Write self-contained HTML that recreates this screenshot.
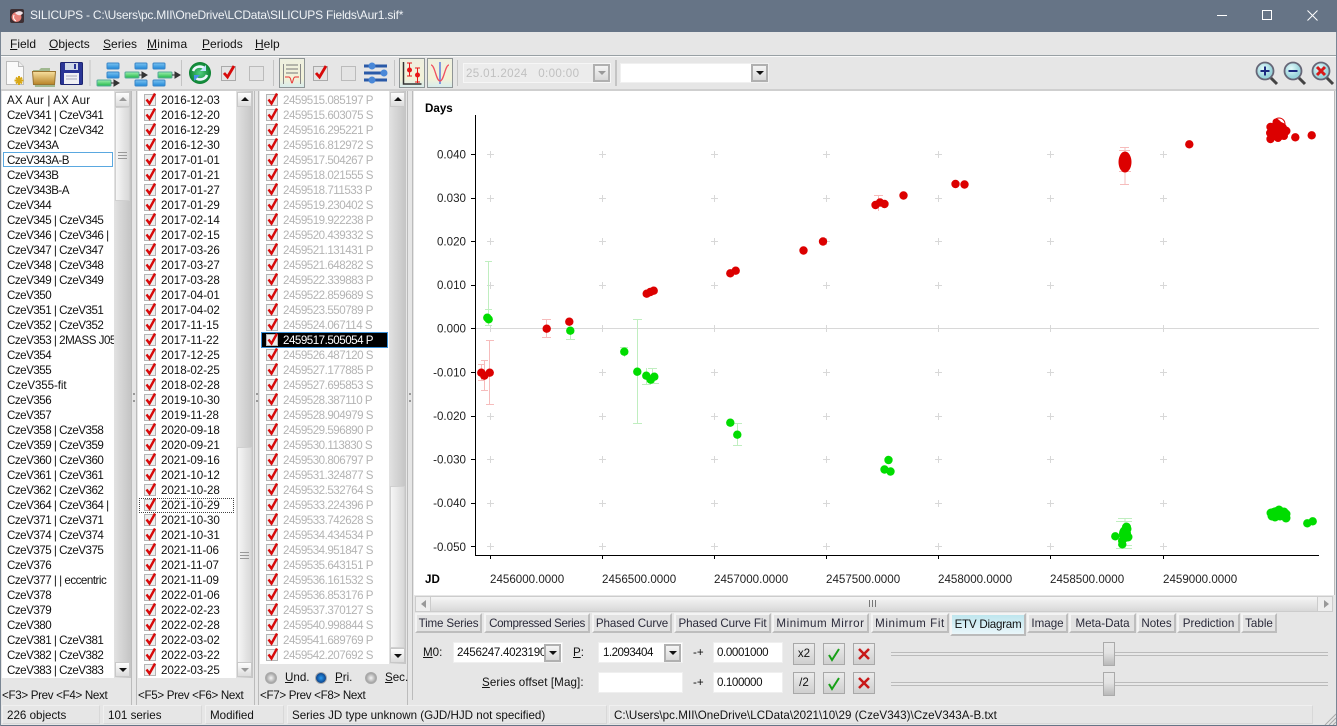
<!DOCTYPE html>
<html><head><meta charset="utf-8"><title>SILICUPS</title>
<style>
html,body{margin:0;padding:0;background:#e6e6e6}
#w{position:relative;width:1337px;height:726px;overflow:hidden;background:#e6e6e6;font:11.6px/15px "Liberation Sans",sans-serif;color:#111}
#w *{box-sizing:border-box}
.a{position:absolute}
.t{position:absolute;white-space:nowrap;line-height:15px}
u{text-decoration:underline}
.list{position:absolute;top:91px;height:587px;background:#fff;overflow:hidden}
.list div{height:15px;line-height:15px;white-space:nowrap;overflow:hidden}
#l1{left:2px;width:112px;padding:2px 0 0 5px;letter-spacing:-.5px}
#l2{left:138px;width:98px;padding:2px 0 0 23px;letter-spacing:-.05px}
#l3{left:260px;width:129px;height:573px;padding:2px 0 0 23px;color:#b4b4b4;letter-spacing:-.5px}
.sb{position:absolute;width:17px;background:linear-gradient(90deg,#e2e2e2,#c4c4c4)}
.th{position:absolute;left:1px;width:15px;background:linear-gradient(90deg,#f6f6f6,#d8d8d8);border:1px solid #d0d0d0}
.ab{position:absolute;left:1px;width:15px;height:15px;background:linear-gradient(#fdfdfd,#dcdcdc);border:1px solid #c8c8c8}
.up:after,.dn:after{content:"";position:absolute;left:3px;border:4px solid transparent}
.up:after{top:1px;border-bottom:4px solid #111;border-top:0;margin-top:3px}
.dn:after{top:5px;border-top:4px solid #111;border-bottom:0}
.g:after{border-top-color:#999!important;border-bottom-color:#999!important}
.tab{position:absolute;top:613px;height:20px;background:#e2e2e2;border:2px solid #f4f4f4;border-bottom:2px solid #bdbdbd;border-right:2px solid #bdbdbd;text-align:center;line-height:17px;white-space:nowrap;color:#2a2a3a}
.inp{position:absolute;background:#fff;border:1px solid #efefef;height:21px;line-height:20px;padding-left:3px;white-space:nowrap;letter-spacing:-.4px}
.btn{position:absolute;width:22px;height:22px;background:linear-gradient(#ececec,#cfcfcf);border:1px solid #a8a8a8;text-align:center;line-height:20px}
.cb{position:absolute;width:17px;height:18px;background:linear-gradient(#f4f4f4,#d8d8d8);border:2px solid #b0b0b0}
.cb:after{content:"";position:absolute;left:3px;top:5px;border:4px solid transparent;border-bottom:0;border-top:4px solid #111}
.tb{position:absolute;top:58px;width:26px;height:30px;border:1px solid #8f9596;background:linear-gradient(#eef0e0,#f3f2d8 70%,#d8ecec)}
.st{position:absolute;top:705px;height:19px;border:1px solid #f0f0f0;border-right-color:#d8d8d8;border-bottom-color:#d8d8d8;line-height:19px;padding-left:4px;white-space:nowrap}
.sl{position:absolute;left:891px;width:437px;height:4px;border-top:1px solid #bbb;border-bottom:1px solid #bbb;background:#e8e8e8}
.slt{position:absolute;left:1103px;width:12px;height:24px;background:linear-gradient(#e8e8e8,#e2e2e2 45%,#b8b8b8);border:1px solid #aaa}
.m{top:37px;font-size:12px}
.f{top:688px;letter-spacing:-.32px}
</style></head><body>
<div id="w">

<!-- title bar -->
<div class="a" style="left:0;top:0;width:1337px;height:32px;background:#667486"></div>
<svg class="a" style="left:9px;top:8px" width="16" height="16" viewBox="0 0 16 16"><rect x="1" y="1" width="14" height="14" rx="2" fill="#3d2f33"/><circle cx="7.500" cy="9" r="5" fill="#e88078"/><path d="M6 5c3-3 7-2 8 0-2 3-5 3-8 0z" fill="#f4e4e8"/><path d="M5 7c-1 3 0 5 2 6" stroke="#fff" fill="none"/></svg>
<div class="t" style="left:30px;top:8px;color:#f0f3f6;font-size:12px;letter-spacing:-.22px">SILICUPS - C:\Users\pc.MII\OneDrive\LCData\SILICUPS Fields\Aur1.sif*</div>
<div class="a" style="left:1217px;top:15px;width:10px;height:1px;background:#fff"></div>
<div class="a" style="left:1262px;top:10px;width:10px;height:10px;border:1px solid #fff"></div>
<svg class="a" style="left:1307px;top:10px" width="11" height="11"><path d="M.5.500l10 10M10.500.500l-10 10" stroke="#fff" fill="none"/></svg>

<!-- menu -->
<div class="t m" style="left:10px"><u>F</u>ield</div>
<div class="t m" style="left:49px"><u>O</u>bjects</div>
<div class="t m" style="left:103px"><u>S</u>eries</div>
<div class="t m" style="left:147px;letter-spacing:.3px"><u>M</u>inima</div>
<div class="t m" style="left:202px"><u>P</u>eriods</div>
<div class="t m" style="left:255px"><u>H</u>elp</div>
<div class="a" style="left:0;top:55px;width:1337px;height:1px;background:#98a0a4"></div>
<div class="a" style="left:0;top:56px;width:1337px;height:1px;background:#fafafa"></div>
<div class="a" style="left:0;top:89px;width:1337px;height:2px;background:#cfcfcf"></div>

<!-- toolbar icons -->
<svg class="a" style="left:0;top:56px" width="470" height="33" viewBox="0 0 470 33">
<defs>
<linearGradient id="bl" x1="0" y1="0" x2="0" y2="1"><stop offset="0" stop-color="#7cc4f0"/><stop offset="1" stop-color="#1f86d8"/></linearGradient>
<linearGradient id="gr" x1="0" y1="0" x2="0" y2="1"><stop offset="0" stop-color="#a0f0b0"/><stop offset="1" stop-color="#20b848"/></linearGradient>
<linearGradient id="fo" x1="0" y1="0" x2="0" y2="1"><stop offset="0" stop-color="#f8e0a0"/><stop offset="1" stop-color="#b88428"/></linearGradient>
<radialGradient id="rf"><stop offset="0" stop-color="#50d080"/><stop offset="1" stop-color="#0a8030"/></radialGradient>
<g id="arr"><rect width="14" height="6" rx="1" fill="url(#gr)" stroke="#5a9"/><path d="M14 3h5M17 0l5 3-5 3z" fill="#333" stroke="#333"/></g>
<g id="bb"><rect width="12" height="6" rx="1" fill="url(#bl)" stroke="#3a86c8"/></g>
<g id="ck"><rect x=".5" y="3.500" width="14" height="14" fill="#e4e4e4" stroke="#aaa"/><path d="M3 10l3.500 4L13 3" fill="none" stroke="#d80a0a" stroke-width="2.800"/></g>
</defs>
<path d="M6.500 5.500h12l5 5v18h-17z" fill="#fafafa" stroke="#bbb"/><path d="M18.500 5.500v5h5" fill="#eee" stroke="#bbb"/>
<path d="M19 20v9M14.500 24.500h9M16 21.500l6 6M22 21.500l-6 6" stroke="#d8a818" stroke-width="2"/>
<path d="M33 14h6l2-2h9v3h5v16H35z" fill="#a0b890" /><path d="M32.500 15.500h23l-1 13h-21z" fill="url(#fo)" stroke="#9a7430"/>
<rect x="60.500" y="6.500" width="22" height="22" rx="1" fill="#2a3596" stroke="#1c2470"/><rect x="65" y="7" width="13" height="7" fill="#d0d8e8"/><rect x="74" y="8" width="2" height="5" fill="#2a3596"/><rect x="64" y="17" width="15" height="11" fill="#f0f0f4"/><path d="M66 20h11M66 23h11" stroke="#aab"/>
<rect x="89.500" y="4" width="1" height="26" fill="#c4c4c4"/>
<use href="#bb" x="107" y="7"/><use href="#bb" x="107" y="16"/><use href="#arr" x="97" y="24"/>
<use href="#bb" x="135" y="7"/><use href="#arr" x="125" y="16"/><use href="#bb" x="135" y="24"/>
<use href="#bb" x="153" y="7"/><use href="#arr" x="158" y="16"/><use href="#bb" x="153" y="24"/>
<rect x="181" y="4" width="1" height="26" fill="#c4c4c4"/>
<circle cx="200" cy="17" r="11" fill="url(#rf)"/><path d="M193 15c2-5 9-6 12-2M207 19c-2 5-9 6-12 2" fill="none" stroke="#f0f8ff" stroke-width="2.600"/><path d="M206 9v6h-6z" fill="#bfe4ff"/><path d="M194 25v-6h6z" fill="#4a90e8"/>
<use href="#ck" x="221" y="7"/>
<rect x="249.500" y="10.500" width="14" height="14" fill="#e4e4e4" stroke="#bbb"/>
<rect x="273" y="4" width="1" height="26" fill="#c4c4c4"/>
<use href="#ck" x="313" y="7"/>
<rect x="341.500" y="10.500" width="14" height="14" fill="#e4e4e4" stroke="#bbb"/>
<g stroke="#2a5aa8" stroke-width="3"><path d="M364 10h23M364 17h23M364 24h23"/></g><circle cx="372" cy="10" r="3.500" fill="#4a88d8"/><circle cx="384" cy="17" r="3.500" fill="#4a88d8"/><circle cx="372" cy="24" r="3.500" fill="#4a88d8"/>
<rect x="394" y="4" width="1" height="26" fill="#c4c4c4"/>
<rect x="457" y="4" width="1" height="26" fill="#c4c4c4"/>
</svg>
<div class="tb" style="left:279px"><svg width="24" height="28"><path d="M3.500 5v20M20.500 5v20" stroke="#888" fill="none"/><path d="M6 6h12M6 10h12M6 14h12" stroke="#777" fill="none"/><path d="M5 18h4c2 0 2 6 3 6s1-6 3-6h4" stroke="#e83030" fill="none"/></svg></div>
<div class="tb" style="left:399px"><svg width="24" height="28"><path d="M3.500 3v22h18" stroke="#333" stroke-width="1.500" fill="none"/><path d="M9.500 4v13M7 4h5M7 17h5M17.500 9v15M15 9h5M15 23h5" stroke="#e81818" fill="none"/><circle cx="9.500" cy="11" r="2.500" fill="#e81818"/><circle cx="17.500" cy="16" r="2.500" fill="#e81818"/></svg></div>
<div class="tb" style="left:427px"><svg width="24" height="28"><path d="M12 3v22" stroke="#5a80e0" stroke-width="1.500" fill="none"/><path d="M3 6c4 0 5 16 9 16s5-16 9-16" stroke="#f05060" stroke-width="1.300" fill="none"/></svg></div>
<div class="a" style="left:463px;top:63px;width:148px;height:20px;background:#ececec;border:1px solid #f6f6f6;color:#c0c0c0;padding-left:2px;line-height:19px;letter-spacing:.35px">25.01.2024&nbsp;&nbsp;&nbsp;0:00:00</div>
<div class="cb g" style="left:593px;top:64px"></div>
<div class="a" style="left:615px;top:60px;width:2px;height:26px;background:#c4c4c4"></div>
<div class="a" style="left:620px;top:63px;width:149px;height:20px;background:#fff;border:1px solid #f0f0f0"></div>
<div class="cb" style="left:751px;top:64px"></div>

<svg class="a" style="left:1250px;top:58px" width="87" height="30" viewBox="0 0 87 30">
<defs><radialGradient id="gl" cx=".4" cy=".35"><stop offset="0" stop-color="#e4fbfb"/><stop offset="1" stop-color="#9ad4dc"/></radialGradient></defs>
<g id="m1"><path d="M20 19l7 7" stroke="#444" stroke-width="3"/><circle cx="15" cy="13" r="8.500" fill="url(#gl)" stroke="#667" stroke-width="1.800"/></g>
<path d="M10.500 13h9M15 8.500v9" stroke="#1a2a80" stroke-width="2"/>
<g transform="translate(28 0)"><path d="M20 19l7 7" stroke="#444" stroke-width="3"/><circle cx="15" cy="13" r="8.500" fill="url(#gl)" stroke="#667" stroke-width="1.800"/><path d="M10.500 13h9" stroke="#1a2a80" stroke-width="2"/></g>
<g transform="translate(56 0)"><path d="M20 19l7 7" stroke="#444" stroke-width="3"/><circle cx="15" cy="13" r="8.500" fill="url(#gl)" stroke="#667" stroke-width="1.800"/><path d="M11 9l8 8M19 9l-8 8" stroke="#d81818" stroke-width="3"/></g>
</svg>

<!-- list 1 -->
<div class="list" id="l1">
<div style="letter-spacing:.15px">AX Aur | AX Aur</div><div>CzeV341 | CzeV341</div><div>CzeV342 | CzeV342</div><div>CzeV343A</div><div>CzeV343A-B</div><div>CzeV343B</div><div>CzeV343B-A</div><div>CzeV344</div><div>CzeV345 | CzeV345</div><div>CzeV346 | CzeV346 |</div><div>CzeV347 | CzeV347</div><div>CzeV348 | CzeV348</div><div>CzeV349 | CzeV349</div><div>CzeV350</div><div>CzeV351 | CzeV351</div><div>CzeV352 | CzeV352</div><div>CzeV353 | 2MASS J05</div><div>CzeV354</div><div>CzeV355</div><div style="letter-spacing:-.1px">CzeV355-fit</div><div>CzeV356</div><div>CzeV357</div><div>CzeV358 | CzeV358</div><div>CzeV359 | CzeV359</div><div>CzeV360 | CzeV360</div><div>CzeV361 | CzeV361</div><div>CzeV362 | CzeV362</div><div>CzeV364 | CzeV364 |</div><div>CzeV371 | CzeV371</div><div>CzeV374 | CzeV374</div><div>CzeV375 | CzeV375</div><div>CzeV376</div><div>CzeV377 | | eccentric</div><div>CzeV378</div><div>CzeV379</div><div>CzeV380</div><div>CzeV381 | CzeV381</div><div>CzeV382 | CzeV382</div><div>CzeV383 | CzeV383</div>
</div>
<div class="a" style="left:3px;top:152px;width:110px;height:15px;border:1px solid #5aa8e0"></div>
<div class="sb" style="left:114px;top:91px;height:587px"><div class="ab up g" style="top:1px"></div><div class="th" style="top:16px;height:94px"><div class="a" style="left:2px;top:44px;width:9px;height:7px;border-top:1px solid #999;border-bottom:1px solid #999"></div><div class="a" style="left:2px;top:47px;width:9px;height:1px;background:#999"></div></div><div class="ab dn" style="top:571px"></div></div>

<!-- list 2 -->
<div class="list" id="l2">
<div>2016-12-03</div><div>2016-12-20</div><div>2016-12-29</div><div>2016-12-30</div><div>2017-01-01</div><div>2017-01-21</div><div>2017-01-27</div><div>2017-01-29</div><div>2017-02-14</div><div>2017-02-15</div><div>2017-03-26</div><div>2017-03-27</div><div>2017-03-28</div><div>2017-04-01</div><div>2017-04-02</div><div>2017-11-15</div><div>2017-11-22</div><div>2017-12-25</div><div>2018-02-25</div><div>2018-02-28</div><div>2019-10-30</div><div>2019-11-28</div><div>2020-09-18</div><div>2020-09-21</div><div>2021-09-16</div><div>2021-10-12</div><div>2021-10-28</div><div>2021-10-29</div><div>2021-10-30</div><div>2021-10-31</div><div>2021-11-06</div><div>2021-11-07</div><div>2021-11-09</div><div>2022-01-06</div><div>2022-02-23</div><div>2022-02-28</div><div>2022-03-02</div><div>2022-03-22</div><div>2022-03-25</div>
</div>
<div class="a" style="left:139px;top:498px;width:95px;height:15px;border:1px dotted #444"></div>
<div class="sb" style="left:236px;top:91px;height:587px"><div class="ab up" style="top:1px"></div><div class="th" style="top:356px;height:216px"><div class="a" style="left:2px;top:104px;width:9px;height:7px;border-top:1px solid #999;border-bottom:1px solid #999"></div><div class="a" style="left:2px;top:107px;width:9px;height:1px;background:#999"></div></div><div class="ab dn g" style="top:571px"></div></div>

<!-- list 3 -->
<div class="list" id="l3">
<div>2459515.085197 P</div><div>2459515.603075 S</div><div>2459516.295221 P</div><div>2459516.812972 S</div><div>2459517.504267 P</div><div>2459518.021555 S</div><div>2459518.711533 P</div><div>2459519.230402 S</div><div>2459519.922238 P</div><div>2459520.439332 S</div><div>2459521.131431 P</div><div>2459521.648282 S</div><div>2459522.339883 P</div><div>2459522.859689 S</div><div>2459523.550789 P</div><div>2459524.067114 S</div><div style="color:transparent">2459517.505054 P</div><div>2459526.487120 S</div><div>2459527.177885 P</div><div>2459527.695853 S</div><div>2459528.387110 P</div><div>2459528.904979 S</div><div>2459529.596890 P</div><div>2459530.113830 S</div><div>2459530.806797 P</div><div>2459531.324877 S</div><div>2459532.532764 S</div><div>2459533.224396 P</div><div>2459533.742628 S</div><div>2459534.434534 P</div><div>2459534.951847 S</div><div>2459535.643151 P</div><div>2459536.161532 S</div><div>2459536.853176 P</div><div>2459537.370127 S</div><div>2459540.998844 S</div><div>2459541.689769 P</div><div>2459542.207692 S</div>
</div>
<div class="a" style="left:261px;top:332px;width:127px;height:16px;background:#000;border:1px solid #3a90d8"></div>
<div class="t" style="left:283px;top:333px;color:#fff;letter-spacing:-.5px">2459517.505054 P</div>
<div class="sb" style="left:389px;top:91px;height:573px"><div class="ab up" style="top:1px"></div><div class="th" style="top:395px;height:162px"></div><div class="ab dn" style="top:557px"></div></div>

<!-- checkbox columns -->
<svg class="a" style="left:0;top:92px" width="410" height="585">
<defs>
<g id="cc"><rect x=".5" y="2.500" width="11" height="11" fill="#eee" stroke="#b4b4b4"/><path d="M2.500 7.500l3 4L11 1.500" fill="none" stroke="#d80a0a" stroke-width="2.400"/></g>
<pattern id="p1" x="144" y="0" width="14" height="15" patternUnits="userSpaceOnUse"><use href="#cc"/></pattern>
<pattern id="p2" x="266" y="0" width="14" height="15" patternUnits="userSpaceOnUse"><use href="#cc"/></pattern>
</defs>
<rect x="144" y="0" width="14" height="585" fill="url(#p1)"/>
<rect x="266" y="0" width="14" height="570" fill="url(#p2)"/>
</svg>

<!-- splitters -->
<div class="a" style="left:131px;top:91px;width:1px;height:614px;background:#bbb"></div>
<div class="a" style="left:136px;top:91px;width:1px;height:614px;background:#bbb"></div>
<div class="a" style="left:254px;top:91px;width:1px;height:614px;background:#bbb"></div>
<div class="a" style="left:258px;top:91px;width:1px;height:614px;background:#bbb"></div>
<div class="a" style="left:407px;top:91px;width:1px;height:614px;background:#bbb"></div>
<div class="a" style="left:412px;top:91px;width:1px;height:609px;background:#bbb"></div>
<div class="a" style="left:133px;top:393px;width:2px;height:9px;border-top:2px dotted #999;border-bottom:2px dotted #999"></div>
<div class="a" style="left:256px;top:393px;width:2px;height:9px;border-top:2px dotted #999;border-bottom:2px dotted #999"></div>
<div class="a" style="left:409px;top:393px;width:2px;height:9px;border-top:2px dotted #999;border-bottom:2px dotted #999"></div>

<!-- radio -->
<svg class="a" style="left:262px;top:670px" width="120" height="15">
<defs><radialGradient id="ra"><stop offset="0" stop-color="#f4f4f4"/><stop offset="1" stop-color="#999"/></radialGradient><radialGradient id="rb"><stop offset="0" stop-color="#2a9af0"/><stop offset="1" stop-color="#0a3a80"/></radialGradient></defs>
<circle cx="9" cy="8" r="5.500" fill="url(#ra)" stroke="#aaa"/>
<circle cx="59" cy="8" r="5.500" fill="url(#rb)" stroke="#aaa"/>
<circle cx="109" cy="8" r="5.500" fill="url(#ra)" stroke="#aaa"/></svg>
<div class="t" style="left:285px;top:670px"><u>U</u>nd.</div>
<div class="t" style="left:335px;top:670px"><u>P</u>ri.</div>
<div class="t" style="left:385px;top:670px"><u>S</u>ec.</div>
<div class="t f" style="left:2px">&lt;F3&gt; Prev &lt;F4&gt; Next</div>
<div class="t f" style="left:138px">&lt;F5&gt; Prev &lt;F6&gt; Next</div>
<div class="t f" style="left:260px">&lt;F7&gt; Prev &lt;F8&gt; Next</div>

<!-- chart -->
<div class="a" style="left:414px;top:91px;width:920px;height:504px;background:#fff"></div>
<svg class="a" style="left:414px;top:91px" width="920" height="504" viewBox="414 91 920 504">
<defs>
<g id="x"><path d="M-3.500 0h7M0-3.500v7" stroke="#d8d8d8" fill="none"/></g>
</defs>
<g>
<use href="#x" x="490.500" y="154.500"/><use href="#x" x="602.500" y="154.500"/><use href="#x" x="714.500" y="154.500"/><use href="#x" x="826.500" y="154.500"/><use href="#x" x="938.500" y="154.500"/><use href="#x" x="1050.500" y="154.500"/><use href="#x" x="1163.500" y="154.500"/>
<use href="#x" x="490.500" y="198.500"/><use href="#x" x="602.500" y="198.500"/><use href="#x" x="714.500" y="198.500"/><use href="#x" x="826.500" y="198.500"/><use href="#x" x="938.500" y="198.500"/><use href="#x" x="1050.500" y="198.500"/><use href="#x" x="1163.500" y="198.500"/>
<use href="#x" x="490.500" y="241.500"/><use href="#x" x="602.500" y="241.500"/><use href="#x" x="714.500" y="241.500"/><use href="#x" x="826.500" y="241.500"/><use href="#x" x="938.500" y="241.500"/><use href="#x" x="1050.500" y="241.500"/><use href="#x" x="1163.500" y="241.500"/>
<use href="#x" x="490.500" y="285.500"/><use href="#x" x="602.500" y="285.500"/><use href="#x" x="714.500" y="285.500"/><use href="#x" x="826.500" y="285.500"/><use href="#x" x="938.500" y="285.500"/><use href="#x" x="1050.500" y="285.500"/><use href="#x" x="1163.500" y="285.500"/>
<use href="#x" x="490.500" y="328.500"/><use href="#x" x="602.500" y="328.500"/><use href="#x" x="714.500" y="328.500"/><use href="#x" x="826.500" y="328.500"/><use href="#x" x="938.500" y="328.500"/><use href="#x" x="1050.500" y="328.500"/><use href="#x" x="1163.500" y="328.500"/>
<use href="#x" x="490.500" y="372.500"/><use href="#x" x="602.500" y="372.500"/><use href="#x" x="714.500" y="372.500"/><use href="#x" x="826.500" y="372.500"/><use href="#x" x="938.500" y="372.500"/><use href="#x" x="1050.500" y="372.500"/><use href="#x" x="1163.500" y="372.500"/>
<use href="#x" x="490.500" y="416.500"/><use href="#x" x="602.500" y="416.500"/><use href="#x" x="714.500" y="416.500"/><use href="#x" x="826.500" y="416.500"/><use href="#x" x="938.500" y="416.500"/><use href="#x" x="1050.500" y="416.500"/><use href="#x" x="1163.500" y="416.500"/>
<use href="#x" x="490.500" y="459.500"/><use href="#x" x="602.500" y="459.500"/><use href="#x" x="714.500" y="459.500"/><use href="#x" x="826.500" y="459.500"/><use href="#x" x="938.500" y="459.500"/><use href="#x" x="1050.500" y="459.500"/><use href="#x" x="1163.500" y="459.500"/>
<use href="#x" x="490.500" y="503.500"/><use href="#x" x="602.500" y="503.500"/><use href="#x" x="714.500" y="503.500"/><use href="#x" x="826.500" y="503.500"/><use href="#x" x="938.500" y="503.500"/><use href="#x" x="1050.500" y="503.500"/><use href="#x" x="1163.500" y="503.500"/>
<use href="#x" x="490.500" y="546.500"/><use href="#x" x="602.500" y="546.500"/><use href="#x" x="714.500" y="546.500"/><use href="#x" x="826.500" y="546.500"/><use href="#x" x="938.500" y="546.500"/><use href="#x" x="1050.500" y="546.500"/><use href="#x" x="1163.500" y="546.500"/>
</g>
<path d="M475 328.500h844" stroke="#d8d8d8" fill="none"/>
<path d="M475.500 115v440.500H1319" stroke="#000" fill="none"/>
<path d="M471 154.500h4M471 198.500h4M471 241.500h4M471 285.500h4M471 328.500h4M471 372.500h4M471 416.500h4M471 459.500h4M471 503.500h4M471 546.500h4M490.500 555v4M602.500 555v4M714.500 555v4M826.500 555v4M938.500 555v4M1050.500 555v4M1163.500 555v4" stroke="#000" fill="none"/>
<!-- green error bars -->
<path d="M488.500 261v64M485 261.500h7M485 309.500h7M485 325.500h7M570.500 330v9M566 339.500h9M624.500 347v10M620 347.500h8M637.500 319v104M633 319.500h9M633 423.500h9M646.500 368v16M642 384.500h9M652.500 368v16M648 368.500h9M654 373v10M650 383.500h9M737.500 423v22M733 423.500h9M733 445.500h9M1125 518v30M1118 518.500h14M1116 521.500h16M1116 548.500h16M1118 545.500h14" stroke="#c0eec0" fill="none"/>
<!-- red error bars -->
<path d="M481.500 364v16M478 364.500h7M478 380.500h7M484.500 360v30M481 360.500h7M481 390.500h7M489.500 340v64M486 340.500h8M486 404.500h8M546.500 319v18M542 319.500h9M542 337.500h9M569.500 318v8M878.500 195v16M874 195.500h9M1125 147v37M1120 147.500h9M1119 150.500h11M1120 184.500h9M1119 171.500h12" stroke="#f6bcbc" fill="none"/>
<!-- green -->
<g fill="#00dc00">
<circle cx="487.300" cy="317.700" r="4.200"/><circle cx="488.700" cy="319.300" r="4.200"/><circle cx="570.300" cy="330.700" r="4.200"/><circle cx="624.300" cy="351.700" r="4.200"/><circle cx="637.300" cy="371.700" r="4.200"/><circle cx="646.300" cy="375.700" r="4.200"/><circle cx="650.700" cy="379.700" r="4.200"/><circle cx="654.300" cy="376.700" r="4.200"/><circle cx="730.300" cy="422.700" r="4.200"/><circle cx="737.300" cy="434.700" r="4.200"/><circle cx="884.500" cy="469.500" r="4.200"/><circle cx="888.500" cy="460" r="4.200"/><circle cx="890.500" cy="471.500" r="4.200"/>
<circle cx="1115.300" cy="536.300" r="4.200"/><circle cx="1122.300" cy="544.300" r="4.200"/><circle cx="1126.500" cy="527" r="4.500"/><circle cx="1127" cy="529" r="4.500"/><circle cx="1125" cy="532" r="4.500"/><circle cx="1124" cy="535" r="4.500"/><circle cx="1128" cy="537" r="4.500"/><circle cx="1124" cy="538" r="4.500"/><circle cx="1122" cy="541" r="4"/><ellipse cx="1125" cy="534" rx="6" ry="8"/>
<ellipse cx="1278" cy="513.500" rx="10" ry="6.500"/><circle cx="1271" cy="513" r="4.500"/><circle cx="1272" cy="516" r="4.500"/><circle cx="1275" cy="512" r="4.500"/><circle cx="1279" cy="510" r="4.500"/><circle cx="1280" cy="514" r="5"/><circle cx="1284" cy="512" r="4.500"/><circle cx="1286" cy="514" r="4.500"/><circle cx="1286" cy="518" r="4.500"/><circle cx="1280" cy="516" r="4.500"/><circle cx="1275" cy="517" r="4.500"/>
<circle cx="1307.300" cy="523.300" r="4.200"/><circle cx="1312.700" cy="521.300" r="4.200"/>
</g>
<!-- red -->
<g fill="#dc0000">
<circle cx="481.300" cy="372.700" r="4.200"/><circle cx="484.300" cy="375.700" r="4.200"/><circle cx="489.700" cy="372.700" r="4.200"/><circle cx="546.700" cy="328.700" r="4.200"/><circle cx="569.300" cy="321.700" r="4.200"/><circle cx="646.700" cy="293.700" r="4.200"/><circle cx="650.300" cy="292" r="4.200"/><circle cx="653.700" cy="290.700" r="4.200"/><circle cx="730.300" cy="273.300" r="4.200"/><circle cx="735.700" cy="270.700" r="4.200"/><circle cx="803.500" cy="250.500" r="4.200"/><circle cx="823" cy="241.500" r="4.200"/><circle cx="875.500" cy="205" r="4.200"/><circle cx="880" cy="202.500" r="4.200"/><circle cx="884.500" cy="204" r="4.200"/><circle cx="903.500" cy="195.500" r="4.200"/><circle cx="955.500" cy="184" r="4.200"/><circle cx="964.500" cy="184.500" r="4.200"/>
<ellipse cx="1125" cy="162" rx="6.500" ry="10.500"/>
<circle cx="1189.300" cy="144.300" r="4.200"/>
<ellipse cx="1278" cy="131" rx="10" ry="9.500"/><circle cx="1270.500" cy="127" r="4.200"/><circle cx="1270.500" cy="133" r="4.500"/><circle cx="1270.500" cy="139" r="4.200"/><circle cx="1275" cy="130" r="5"/><circle cx="1277" cy="124" r="4.500"/><circle cx="1279" cy="135" r="5"/><circle cx="1282" cy="128" r="5"/><circle cx="1286" cy="131" r="4.500"/><circle cx="1278" cy="138" r="4"/><circle cx="1284" cy="136" r="4"/><circle cx="1276" cy="122" r="3.500"/>
<circle cx="1295.300" cy="137.300" r="4.200"/><circle cx="1311.700" cy="135.300" r="4.200"/>
</g>
<circle cx="1279" cy="124" r="6" fill="none" stroke="#dc0000"/>
<g font-family="Liberation Sans,sans-serif" font-size="11.600" fill="#222">
<text x="425" y="112" font-weight="700" fill="#000">Days</text>
<text x="466" y="158.500" text-anchor="end">0.040</text><text x="466" y="202" text-anchor="end">0.030</text><text x="466" y="245.500" text-anchor="end">0.020</text><text x="466" y="289" text-anchor="end">0.010</text><text x="466" y="332.500" text-anchor="end">0.000</text><text x="466" y="376.500" text-anchor="end">-0.010</text><text x="466" y="420" text-anchor="end">-0.020</text><text x="466" y="463.500" text-anchor="end">-0.030</text><text x="466" y="507" text-anchor="end">-0.040</text><text x="466" y="551" text-anchor="end">-0.050</text>
<text x="425" y="583" font-weight="700" fill="#000">JD</text>
<text x="490" y="583">2456000.0000</text><text x="602" y="583">2456500.0000</text><text x="714" y="583">2457000.0000</text><text x="826" y="583">2457500.0000</text><text x="938" y="583">2458000.0000</text><text x="1050" y="583">2458500.0000</text><text x="1163" y="583">2459000.0000</text>
</g>
</svg>
<div class="a" style="left:1334px;top:91px;width:1px;height:504px;background:#bbb"></div>

<!-- h scrollbar -->
<div class="a" style="left:415px;top:596px;width:918px;height:16px;background:linear-gradient(#f6f6f6,#d8d8d8);border:1px solid #ccc"></div>
<div class="a" style="left:416px;top:597px;width:15px;height:14px;background:#eee;border-right:1px solid #ccc"></div>
<div class="a" style="left:421px;top:600px;border:4px solid transparent;border-left:0;border-right:5px solid #999"></div>
<div class="a" style="left:1317px;top:597px;width:15px;height:14px;background:#eee;border-left:1px solid #ccc"></div>
<div class="a" style="left:1324px;top:600px;border:4px solid transparent;border-right:0;border-left:5px solid #999"></div>
<div class="a" style="left:869px;top:600px;width:9px;height:7px;background:repeating-linear-gradient(90deg,#777 0 1px,transparent 1px 3px)"></div>

<!-- tabs -->
<div class="tab" style="left:415px;width:67px;letter-spacing:-.15px">Time Series</div>
<div class="tab" style="left:484px;width:106px;letter-spacing:-.35px">Compressed Series</div>
<div class="tab" style="left:592px;width:80px;letter-spacing:-.1px">Phased Curve</div>
<div class="tab" style="left:674px;width:97px;letter-spacing:-.1px">Phased Curve Fit</div>
<div class="tab" style="left:772px;width:97px;letter-spacing:.55px">Minimum Mirror</div>
<div class="tab" style="left:871px;width:78px;letter-spacing:.6px">Minimum Fit</div>
<div class="tab" style="left:950px;top:613px;width:76px;height:23px;background:linear-gradient(#bfe6ee,#eaf6fa);border-color:#f4f4f4 #bbb #bbb #f4f4f4;line-height:20px;color:#111;letter-spacing:-.25px">ETV Diagram</div>
<div class="tab" style="left:1027px;width:41px">Image</div>
<div class="tab" style="left:1069px;width:67px">Meta-Data</div>
<div class="tab" style="left:1137px;width:39px">Notes</div>
<div class="tab" style="left:1177px;width:63px">Prediction</div>
<div class="tab" style="left:1241px;width:36px">Table</div>

<!-- controls -->
<div class="t" style="left:423px;top:645px"><u>M</u>0:</div>
<div class="inp" style="left:453px;top:642px;width:110px;padding-left:3px;letter-spacing:-.3px">2456247.4023190</div>
<div class="cb" style="left:544px;top:644px"></div>
<div class="t" style="left:573px;top:645px"><u>P</u>:</div>
<div class="inp" style="left:598px;top:642px;width:85px;padding-left:4px;letter-spacing:-.55px">1.2093404</div>
<div class="cb" style="left:664px;top:644px"></div>
<div class="t" style="left:693px;top:645px">-+</div>
<div class="inp" style="left:713px;top:642px;width:70px">0.0001000</div>
<div class="btn" style="left:793px;top:643px">x2</div>
<div class="btn" style="left:823px;top:643px"><svg width="20" height="20"><path d="M5 11l3 5 7-11" fill="none" stroke="#18a018" stroke-width="2"/></svg></div>
<div class="btn" style="left:853px;top:643px"><svg width="20" height="20"><path d="M5 5l10 10M15 5L5 15" fill="none" stroke="#c81818" stroke-width="2.500"/></svg></div>
<div class="t" style="left:482px;top:675px;letter-spacing:.1px"><u>S</u>eries offset [Mag]:</div>
<div class="inp" style="left:598px;top:672px;width:85px"></div>
<div class="t" style="left:693px;top:675px">-+</div>
<div class="inp" style="left:713px;top:672px;width:70px">0.100000</div>
<div class="btn" style="left:793px;top:672px">/2</div>
<div class="btn" style="left:823px;top:672px"><svg width="20" height="20"><path d="M5 11l3 5 7-11" fill="none" stroke="#18a018" stroke-width="2"/></svg></div>
<div class="btn" style="left:853px;top:672px"><svg width="20" height="20"><path d="M5 5l10 10M15 5L5 15" fill="none" stroke="#c81818" stroke-width="2.500"/></svg></div>
<div class="sl" style="top:652px"></div><div class="slt" style="top:642px"></div>
<div class="sl" style="top:682px"></div><div class="slt" style="top:672px"></div>

<!-- status -->
<div class="st" style="left:2px;width:98px">226 objects</div>
<div class="st" style="left:103px;width:99px">101 series</div>
<div class="st" style="left:205px;width:79px">Modified</div>
<div class="st" style="left:287px;width:320px">Series JD type unknown (GJD/HJD not specified)</div>
<div class="st" style="left:609px;width:704px;letter-spacing:.04px">C:\Users\pc.MII\OneDrive\LCData\2021\10\29 (CzeV343)\CzeV343A-B.txt</div>
<svg class="a" style="left:1323px;top:712px" width="14" height="13"><path d="M13 2L2 13M13 6l-7 7M13 10l-3 3" stroke="#aaa" fill="none"/></svg>
<div class="a" style="left:0;top:725px;width:1337px;height:1px;background:#667486"></div>
<div class="a" style="left:0;top:32px;width:1px;height:694px;background:#7a8694"></div>
<div class="a" style="left:1336px;top:32px;width:1px;height:694px;background:#7a8694"></div>
</div>
</body></html>
